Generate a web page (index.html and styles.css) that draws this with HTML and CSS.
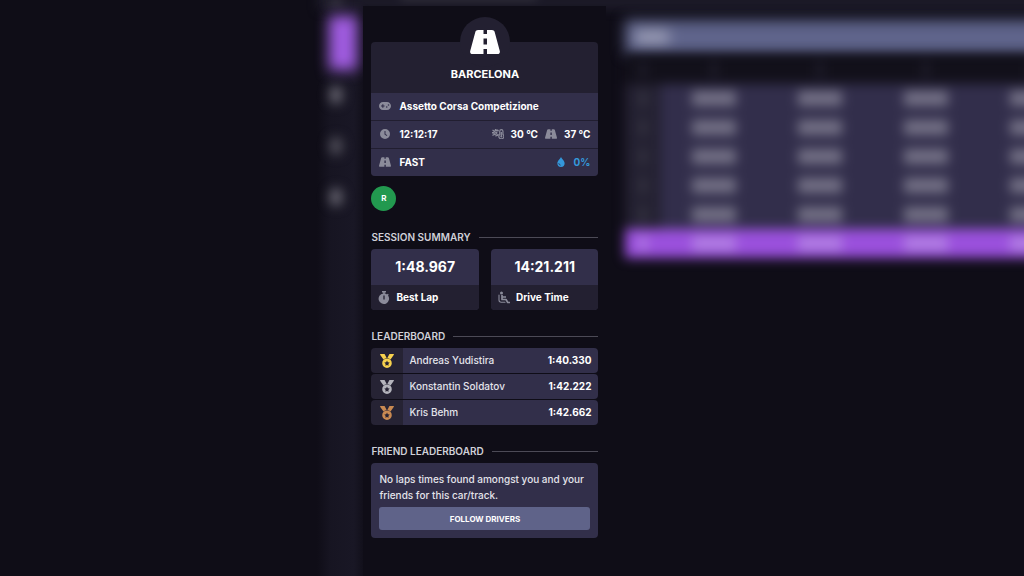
FILE: index.html
```html
<!DOCTYPE html>
<html lang="en">
<head>
    <meta charset="UTF-8">
    <meta name="viewport" content="width=device-width, initial-scale=1.0">
    <title>Barcelona</title>
    <link rel="stylesheet" href="styles.css">
</head>
<body>
    <!-- shared icons -->
    <svg class="sprite" aria-hidden="true">
        <symbol id="road" viewBox="0 0 30 24">
            <path fill-rule="evenodd" d="M8 0h5.500v4h3.500V0h5c1.300 0 2.200.7 2.600 1.800L29.800 21c.4 1.600-.6 3-2.200 3H17v-5h-3.500v5H2.400C.8 24-.2 22.600.2 21L5.400 1.800C5.800.7 6.700 0 8 0zM13.500 8.500v6H17v-6z"/>
        </symbol>
        <symbol id="gamepad" viewBox="0 0 24 16">
            <path fill-rule="evenodd" d="M8 0h8c4.500 0 8 3.500 8 8s-3.500 8-8 8H8c-4.500 0-8-3.500-8-8s3.500-8 8-8zM6.500 4.500v2.300H4v2.400h2.500v2.300h2.300V9.200h2.400V6.800H8.800V4.500zM15.500 8.500a1.600 1.600 0 1 0 0 3.200 1.600 1.600 0 0 0 0-3.200zM19 4.500a1.600 1.600 0 1 0 0 3.200 1.600 1.600 0 0 0 0-3.200z"/>
        </symbol>
        <symbol id="clock" viewBox="0 0 20 20">
            <path fill-rule="evenodd" d="M10 0a10 10 0 1 1 0 20 10 10 0 0 1 0-20zM9 4v7l4.500 3 1.200-1.700L11 10V4z"/>
        </symbol>
        <symbol id="temp" viewBox="0 0 24 20">
            <path fill="none" stroke="currentColor" stroke-width="2.400" d="M15.500 11V4.500a3.200 3.200 0 0 1 6.400 0V11a5 5 0 1 1-6.400 0zM18.700 6v9"/>
            <circle cx="18.700" cy="15" r="2"/>
            <path fill="none" stroke="currentColor" stroke-width="2.600" d="M13 10.500a5 5 0 1 1 0-6M1 2l3 2M7 0v3M1 13l3-2M8 15v-3M0 7.500h3M12.500 1.500l-2 2M12.500 13.500l-2-2"/>
            <circle cx="8.500" cy="7.500" r="2.400"/>
        </symbol>
        <symbol id="drop" viewBox="0 0 16 22">
            <path fill-rule="evenodd" d="M8 0c1 3 8 8 8 14a8 8 0 0 1-16 0C0 8 7 3 8 0zM4 13H2.500c0 3.500 2 5.500 5 5.500V17C5 17 4 15.500 4 13z"/>
        </symbol>
        <symbol id="stopwatch" viewBox="0 0 22 26">
            <path fill-rule="evenodd" d="M7 0h8v3h-2.500v2a10 10 0 0 1 4.500 2l1.500-1.500 2 2L19 9a10.500 10.500 0 1 1-9.500-4V3H7zM9.700 9v8h2.600V9z"/>
        </symbol>
        <symbol id="seat" viewBox="0 0 24 24">
            <circle cx="7" cy="3" r="3"/>
            <path fill="none" stroke="currentColor" stroke-width="3.400" stroke-linejoin="round" d="M8 7v9h8l3.500 6H24M8 11h8"/>
            <path fill="none" stroke="currentColor" stroke-width="2.200" stroke-linecap="round" d="M2 7v10c0 2.500 1.500 4.500 4.500 4.500H14"/>
        </symbol>
        <symbol id="medal" viewBox="0 0 26 26">
            <path d="M1 0h6.500c.7 0 1.200.3 1.500.9L12.300 7.500c-2 .2-4 1-5.800 2.600L.2 1.400C-.2.800.2 0 1 0zM25 0h-6.500c-.7 0-1.200.3-1.500.9L13.700 7.500c2 .2 4 1 5.800 2.600l6.300-8.700c.4-.6 0-1.400-.8-1.400z"/>
            <path fill-rule="evenodd" d="M13 8.200a8.900 8.900 0 1 1 0 17.800 8.900 8.900 0 0 1 0-17.800zM13 12.200l-1.500 3.200-3.500.5 2.500 2.500-.6 3.500 3.100-1.700 3.100 1.700-.6-3.500 2.500-2.500-3.500-.5z"/>
        </symbol>
    </svg>

    <div class="topbar" aria-hidden="true"><span></span></div>

    <div class="layout">
        <div class="rail" aria-hidden="true">
            <span class="dot first"></span>
            <span class="active"></span>
            <span class="dot"></span>
            <span class="dot dim"></span>
            <span class="dot"></span>
        </div>

        <main class="panel">
            <section class="card track">
                <div class="badge"><svg class="icon"><use href="#road"/></svg></div>
                <h1>BARCELONA</h1>
                <div class="row">
                    <svg class="icon"><use href="#gamepad"/></svg>
                    <span>Assetto Corsa Competizione</span>
                </div>
                <div class="row">
                    <svg class="icon"><use href="#clock"/></svg>
                    <span>12:12:17</span>
                    <div class="right">
                        <svg class="icon"><use href="#temp"/></svg>
                        <span>30 °C</span>
                        <svg class="icon"><use href="#road"/></svg>
                        <span>37 °C</span>
                    </div>
                </div>
                <div class="row">
                    <svg class="icon"><use href="#road"/></svg>
                    <span>FAST</span>
                    <div class="right rain">
                        <svg class="icon"><use href="#drop"/></svg>
                        <span>0%</span>
                    </div>
                </div>
            </section>

            <div class="session">R</div>

            <h2>SESSION SUMMARY</h2>
            <div class="stats">
                <div class="card stat">
                    <strong>1:48.967</strong>
                    <div class="label"><svg class="icon"><use href="#stopwatch"/></svg>Best Lap</div>
                </div>
                <div class="card stat">
                    <strong>14:21.211</strong>
                    <div class="label"><svg class="icon"><use href="#seat"/></svg>Drive Time</div>
                </div>
            </div>

            <h2>LEADERBOARD</h2>
            <table class="leaders">
                <tr>
                    <td class="medal gold"><svg class="icon"><use href="#medal"/></svg></td>
                    <td>Andreas Yudistira</td>
                    <td class="time">1:40.330</td>
                </tr>
                <tr>
                    <td class="medal silver"><svg class="icon"><use href="#medal"/></svg></td>
                    <td>Konstantin Soldatov</td>
                    <td class="time">1:42.222</td>
                </tr>
                <tr>
                    <td class="medal bronze"><svg class="icon"><use href="#medal"/></svg></td>
                    <td>Kris Behm</td>
                    <td class="time">1:42.662</td>
                </tr>
            </table>

            <h2>FRIEND LEADERBOARD</h2>
            <section class="card friends">
                <p>No laps times found amongst you and your friends for this car/track.</p>
                <button type="button">FOLLOW DRIVERS</button>
            </section>
        </main>

        <div class="laps" aria-hidden="true">
            <div class="laps-title"><span></span></div>
            <table>
                <tr class="head"><td><i></i></td><td><i></i></td><td><i></i></td><td><i></i></td><td><i></i></td></tr>
                <tr><td><i></i></td><td><i></i></td><td><i></i></td><td><i></i></td><td><i></i></td></tr>
                <tr><td><i></i></td><td><i></i></td><td><i></i></td><td><i></i></td><td><i></i></td></tr>
                <tr><td><i></i></td><td><i></i></td><td><i></i></td><td><i></i></td><td><i></i></td></tr>
                <tr><td><i></i></td><td><i></i></td><td><i></i></td><td><i></i></td><td><i></i></td></tr>
                <tr><td><i></i></td><td><i></i></td><td><i></i></td><td><i></i></td><td><i></i></td></tr>
                <tr class="best"><td><i></i></td><td><i></i></td><td><i></i></td><td><i></i></td><td><i></i></td></tr>
            </table>
        </div>
    </div>
</body>
</html>
```
FILE: styles.css
```css
* {
    box-sizing: border-box;
}

body {
    margin: 0;
    min-height: 100vh;
    position: relative;
    overflow-x: hidden;
    background: #0f0d17;
    color: #fff;
    font-family: Inter, "Liberation Sans", sans-serif;
    font-size: 10px;
    line-height: 16px;
}

h1, h2, p {
    margin: 0;
}

.sprite {
    position: absolute;
    width: 0;
    height: 0;
}

.icon {
    display: block;
    width: 12px;
    height: 10px;
    fill: currentColor;
    color: #8b8b9a;
}

/* blurred app behind the panel */
.topbar {
    position: absolute;
    top: -8px;
    left: 31%;
    right: -20px;
    height: 18px;
    background: #1c1a28;
    filter: blur(5px);
}

.topbar span {
    display: block;
    width: 136px;
    height: 8px;
    margin-left: 84px;
    background: #34323e;
}

.layout {
    display: grid;
    grid-template-columns: 46px 243px 1fr;
    min-height: 100vh;
    margin-left: 31%;
}

.rail {
    display: flex;
    flex-direction: column;
    align-items: center;
    background: linear-gradient(90deg, #0f0d17, #171522 30%, #191725 80%, #12101b);
}

.rail .active {
    width: 28px;
    height: 54px;
    margin: 12px 0 16px 6px;
    background: #a05ce0;
    filter: blur(7px);
}

.rail .dot {
    width: 12px;
    height: 18px;
    margin: 0 8px 33px 0;
    border-radius: 8px;
    background: #6a6873;
    filter: blur(6px);
}

.rail .first {
    height: 4px;
    margin-bottom: 0;
}

.rail .dim {
    background: #54525d;
}

.panel {
    position: relative;
    margin-top: 6px;
    padding: 36px 8px 38px;
    background: #0f0d17;
}

.card {
    border-radius: 4px;
    background: #322f4a;
}

.track {
    display: flow-root;
    background: #232031;
}

.badge {
    display: flex;
    align-items: center;
    justify-content: center;
    width: 50px;
    height: 50px;
    margin: -25px auto 0;
    border-radius: 50%;
    background: #232031;
}

.track .badge .icon {
    width: 30px;
    height: 24px;
    color: #fff;
}

h1 {
    padding-bottom: 12px;
    font-size: 11px;
    font-weight: 700;
    line-height: 14px;
    text-align: center;
}

.row {
    display: flex;
    align-items: center;
    gap: 8px;
    height: 27px;
    padding: 0 8px 1px;
    background: #322f4a;
    font-weight: 700;
}

.row + .row {
    height: 28px;
    padding-bottom: 2px;
    border-top: 1px solid #211e30;
}

.row:last-child {
    border-radius: 0 0 4px 4px;
}

.right {
    display: flex;
    align-items: center;
    gap: 7px;
    margin-left: auto;
}

.rain, .rain .icon {
    color: #3498db;
}

.session {
    width: 25px;
    height: 25px;
    margin-top: 10px;
    border-radius: 50%;
    background: #22994f;
    font-size: 8px;
    font-weight: 700;
    line-height: 25px;
    text-align: center;
}

h2 {
    display: flex;
    align-items: center;
    gap: 8px;
    margin: 18px 0 4px;
    color: #d0d0d8;
    font-size: 10px;
    font-weight: 600;
}

h2::after {
    content: "";
    flex: 1;
    height: 1px;
    background: #4c4a56;
}

.stats {
    display: grid;
    grid-template-columns: 1fr 1fr;
    gap: 12px;
}

.stat strong {
    display: block;
    font-size: 14px;
    font-weight: 700;
    line-height: 36px;
    text-align: center;
}

.label {
    display: flex;
    align-items: center;
    gap: 6px;
    height: 25px;
    padding: 0 7px 1px;
    border-radius: 0 0 4px 4px;
    background: #232031;
    font-weight: 700;
}

.label .icon {
    height: 13px;
}

.leaders {
    width: 100%;
    border-collapse: separate;
    border-spacing: 0 1px;
    margin: -1px 0;
}

.leaders td {
    height: 25px;
    padding: 0 0 1px 6px;
    background: #322f4a;
    color: #e4e4ea;
    font-weight: 500;
}

.leaders .medal {
    width: 32px;
    padding: 0;
    border-radius: 4px 0 0 4px;
    background: #262334;
}

.leaders .time {
    padding-right: 7px;
    border-radius: 0 4px 4px 0;
    color: #fff;
    font-weight: 700;
    text-align: right;
}

.medal .icon {
    width: 14px;
    height: 14px;
    margin: auto;
}

.gold .icon {
    color: #f8d24e;
}

.silver .icon {
    color: #b4b4bc;
}

.bronze .icon {
    color: #c98a52;
}

.friends {
    padding: 8px;
}

.friends p {
    color: #e4e4ea;
    font-weight: 500;
}

.friends button {
    display: block;
    width: 100%;
    height: 23px;
    margin-top: 4px;
    border: 0;
    border-radius: 3px;
    background: #5f6389;
    color: #fff;
    font-family: inherit;
    font-size: 8px;
    font-weight: 700;
}

/* blurred lap table */
.laps {
    overflow: hidden;
    padding: 20px 0 0 19px;
}

.laps-title {
    width: 500px;
    height: 35px;
    padding: 10px;
    background: #5f648b;
    filter: blur(7px);
}

.laps-title span {
    display: block;
    width: 34px;
    height: 14px;
    background: #9a9cb4;
}

.laps table {
    width: 460px;
    table-layout: fixed;
    border-collapse: collapse;
    filter: blur(6px);
}

.laps td {
    height: 29px;
    padding: 0;
    background: #322e4b;
}

.laps td:first-child {
    width: 36px;
    background: #242132;
}

.laps i {
    display: block;
    width: 44px;
    height: 15px;
    margin: auto;
    background: #747186;
}

.laps td:first-child i {
    width: 8px;
    background: #34323f;
}

.laps .head td {
    background: #12101a;
}

.laps .head td i {
    width: 8px;
    background: #1e1c29;
}

.laps .best td {
    background: #9a50dc;
}

.laps .best td i {
    background: #b07ce2;
}
```
